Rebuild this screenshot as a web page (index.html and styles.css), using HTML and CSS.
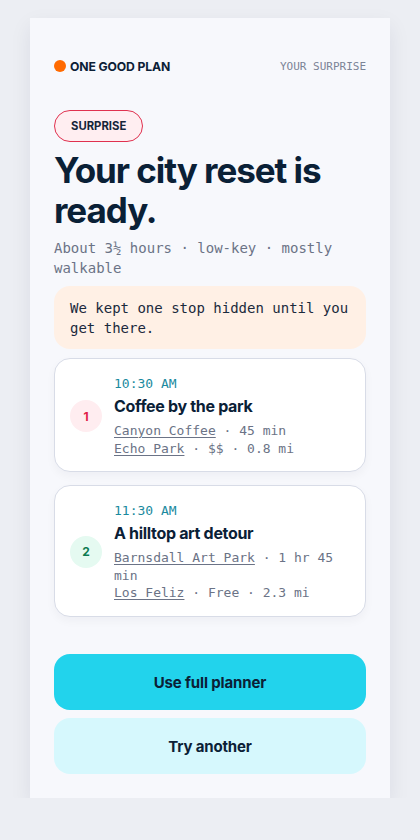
FILE: index.html
```html
<!DOCTYPE html>
<html lang="en">
<head>
<meta charset="utf-8">
<title>One Good Plan</title>
<link rel="stylesheet" href="styles.css">
</head>
<body>
<main class="panel">
  <header class="top">
    <div class="brand"><span class="dot"></span>ONE GOOD PLAN</div>
    <div class="top-label">YOUR SURPRISE</div>
  </header>
  <span class="badge">SURPRISE</span>
  <h1 class="title">Your city reset is ready.</h1>
  <p class="sub">About 3½ hours · low-key · mostly walkable</p>
  <div class="note">We kept one stop hidden until you get there.</div>
  <ol class="stops">
    <li class="card">
      <span class="num num-1">1</span>
      <div class="info">
        <div class="time">10:30 AM</div>
        <div class="name">Coffee by the park</div>
        <div class="meta"><span class="link">Canyon Coffee</span> · 45 min<br><span class="link">Echo Park</span> · $$ · 0.8 mi</div>
      </div>
    </li>
    <li class="card">
      <span class="num num-2">2</span>
      <div class="info">
        <div class="time">11:30 AM</div>
        <div class="name">A hilltop art detour</div>
        <div class="meta"><span class="link">Barnsdall Art Park</span> · 1 hr 45 min<br><span class="link">Los Feliz</span> · Free · 2.3 mi</div>
      </div>
    </li>
  </ol>
  <div class="actions">
    <button class="btn btn-primary">Use full planner</button>
    <button class="btn btn-secondary">Try another</button>
  </div>
</main>
</body>
</html>
```
FILE: styles.css
```css
* { box-sizing: border-box; }
html, body { margin: 0; padding: 0; }
body {
  background: #eceef3;
  font-family: Inter, "Noto Sans", sans-serif;
  color: #0b2036;
  padding: 18px 30px 0;
}
.panel {
  width: 360px;
  height: 780px;
  background: #f7f8fc;
  box-shadow: 0 8px 20px rgba(20, 30, 60, 0.08);
  padding: 24px 24px 24px;
  display: flex;
  flex-direction: column;
}
.top {
  display: flex;
  justify-content: space-between;
  align-items: center;
  margin-top: 16px;
  height: 16px;
}
.brand {
  display: flex;
  align-items: center;
  gap: 4px;
  font-weight: 700;
  font-size: 12.2px;
  letter-spacing: -0.01em;
}
.dot {
  width: 12px;
  height: 12px;
  border-radius: 50%;
  background: #ff6a00;
}
.top-label {
  font-family: "DejaVu Sans Mono", monospace;
  font-size: 11px;
  color: #7b8396;
}
.badge {
  align-self: flex-start;
  margin-top: 36px;
  height: 32px;
  padding: 0 16px 0 16px;
  display: flex;
  align-items: center;
  border: 1px solid #e0314f;
  background: #ffeef1;
  border-radius: 16px;
  font-size: 11.3px;
  font-weight: 700;
  color: #16253a;
}
.title {
  margin: 8px 0 0;
  font-size: 35px;
  line-height: 40px;
  font-weight: 700;
  letter-spacing: -0.03em;
  color: #0a2036;
}
.sub {
  margin: 8px 0 0;
  font-family: "DejaVu Sans Mono", monospace;
  font-size: 14px;
  line-height: 20px;
  color: #6b7386;
}
.note {
  margin-top: 8px;
  background: #fff0e5;
  border-radius: 16px;
  padding: 12px 16px 11px;
  font-family: "DejaVu Sans Mono", monospace;
  font-size: 14px;
  line-height: 20px;
  color: #1b2a3d;
}
.stops {
  list-style: none;
  margin: 9px 0 0;
  padding: 0;
  display: flex;
  flex-direction: column;
  gap: 13px;
}
.card {
  background: #fff;
  border: 1px solid #d8dce7;
  border-radius: 16px;
  padding: 16px 16px 14px 15px;
  display: flex;
  align-items: center;
  gap: 12px;
  box-shadow: 0 4px 10px rgba(20, 30, 60, 0.04);
}
.num {
  flex: none;
  width: 32px;
  height: 32px;
  border-radius: 50%;
  display: flex;
  align-items: center;
  justify-content: center;
  font-size: 12px;
  font-weight: 700;
}
.num-1 { background: #ffedf0; color: #e11d48; }
.num-2 { background: #e5faf1; color: #0c7a50; }
.info { display: flex; flex-direction: column; }
.time {
  font-family: "DejaVu Sans Mono", monospace;
  font-size: 13px;
  line-height: 18px;
  color: #1a8a9e;
}
.name {
  margin-top: 3px;
  font-size: 16px;
  line-height: 20px;
  font-weight: 700;
  letter-spacing: -0.02em;
  color: #0a2036;
}
.meta {
  margin-top: 6px;
  font-family: "DejaVu Sans Mono", monospace;
  font-size: 13px;
  line-height: 17.5px;
  color: #6b7386;
}
.link {
  text-decoration: underline;
  text-underline-offset: 2px;
  text-decoration-thickness: 1px;
}
.actions {
  margin-top: auto;
  display: flex;
  flex-direction: column;
  gap: 8px;
}
.btn {
  height: 56px;
  border: none;
  border-radius: 16px;
  font-family: Inter, "Noto Sans", sans-serif;
  font-size: 15px;
  font-weight: 700;
  letter-spacing: -0.01em;
  color: #0b2036;
  cursor: pointer;
}
.btn-primary { background: #22d3ec; }
.btn-secondary { background: #d6f8fd; }
```
